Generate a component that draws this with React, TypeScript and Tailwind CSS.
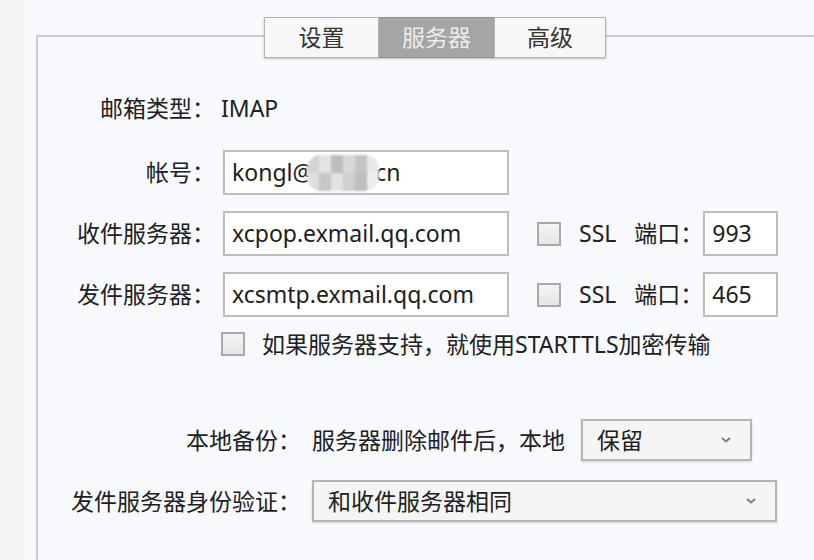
import React from 'react';

const Chevron: React.FC = () => (
  <svg width="12" height="8" viewBox="0 0 12 8" className="shrink-0">
    <path d="M2 2 L6 5.5 L10 2" fill="none" stroke="#808080" strokeWidth="2" />
  </svg>
);

const Checkbox: React.FC = () => (
  <div className="h-[24px] w-[24px] shrink-0 border-2 border-[#a9a9a9] bg-gradient-to-b from-[#f4f4f4] to-[#e6e6e6]" />
);

const TextBox: React.FC<{ className?: string; children: React.ReactNode }> = ({ className = '', children }) => (
  <div className={`flex h-[45px] items-center overflow-hidden border-2 border-[#bdbdbd] bg-white px-[7px] ${className}`}>
    {children}
  </div>
);

// blurred part of the address
const Mosaic: React.FC = () => {
  const tiles = ['#d4d4d4', '#e4e4e4', '#bdbdbd', '#d8d8d8', '#c4c4c4', '#e8e8e8', '#dedede', '#c6c6c6', '#e2e2e2', '#cfcfcf', '#bfbfbf', '#ededed'];
  return (
    <span className="-ml-[6px] -mr-[4px] inline-grid h-[36px] w-[72px] shrink-0 grid-cols-6 grid-rows-2 overflow-hidden rounded-[14px] blur-[1px]">
      {tiles.map((c, i) => (
        <span key={i} className="block" style={{ backgroundColor: c }} />
      ))}
    </span>
  );
};

const ServerRow: React.FC<{ label: string; host: string; port: string }> = ({ label, host, port }) => (
  <div className="flex items-center">
    <div className="w-[177px] shrink-0 text-right">{label}</div>
    <TextBox className="ml-[8px] w-[286px]">{host}</TextBox>
    <div className="ml-[28px] flex items-center">
      <Checkbox />
      <span className="ml-[18px]">SSL</span>
      <span className="ml-[18px]">端口：</span>
    </div>
    <TextBox className="w-[75px]">{port}</TextBox>
  </div>
);

export default function App() {
  return (
    <div className="flex h-[560px] w-[814px] overflow-hidden bg-[#f8f9fd] font-['Noto_Sans','Noto_Sans_CJK_SC',sans-serif] text-[23px] text-[#202020]">
      <div className="w-[24px] shrink-0 bg-[#f4f4f4]" />
      <div className="relative flex-1">
        {/* tab strip over the group box border */}
        <div className="absolute left-[240px] top-[17px] z-10 flex h-[41px] text-[23px] shadow-[0_1px_2px_rgba(0,0,0,0.25)]">
          <div className="flex w-[115px] items-center justify-center border border-[#b3b3b3] bg-[#f7f7f7] text-[#333]">设置</div>
          <div className="flex w-[115px] items-center justify-center border-y border-[#8f8f8f] bg-[#a5a5a5] text-[#ececec]">服务器</div>
          <div className="flex w-[112px] items-center justify-center border border-[#b3b3b3] bg-[#f7f7f7] text-[#333]">高级</div>
        </div>

        <div className="ml-[12px] mt-[35px] h-full border-l-2 border-t-2 border-[#cbcbcb] pt-[49px]">
          <div className="flex h-[44px] items-center">
            <div className="w-[177px] shrink-0 text-right">邮箱类型：</div>
            <div className="ml-[6px]">IMAP</div>
          </div>

          <div className="mt-[20px] flex items-center">
            <div className="w-[177px] shrink-0 text-right">帐号：</div>
            <TextBox className="ml-[8px] w-[286px]">
              <span>kongl@</span>
              <Mosaic />
              <span>cn</span>
            </TextBox>
          </div>

          <div className="mt-[16px]">
            <ServerRow label="收件服务器：" host="xcpop.exmail.qq.com" port="993" />
          </div>
          <div className="mt-[16px]">
            <ServerRow label="发件服务器：" host="xcsmtp.exmail.qq.com" port="465" />
          </div>

          <div className="mt-[15px] flex h-[24px] items-center pl-[183px]">
            <Checkbox />
            <span className="ml-[17px]">如果服务器支持，就使用STARTTLS加密传输</span>
          </div>

          <div className="mt-[63px] flex items-center">
            <div className="w-[263px] shrink-0 text-right">本地备份：</div>
            <span className="ml-[11px]">服务器删除邮件后，本地</span>
            <div className="ml-[16px] flex h-[42px] w-[171px] items-center justify-between border-2 border-[#b5b5b5] bg-[#f5f5f5] pl-[14px] pr-[18px] shadow-[0_1px_2px_rgba(0,0,0,0.15)]">
              <span>保留</span>
              <Chevron />
            </div>
          </div>

          <div className="mt-[19px] flex items-center">
            <div className="w-[263px] shrink-0 text-right">发件服务器身份验证：</div>
            <div className="ml-[11px] flex h-[42px] w-[465px] items-center justify-between border-2 border-[#b5b5b5] bg-[#f5f5f5] pl-[14px] pr-[18px] shadow-[0_1px_2px_rgba(0,0,0,0.15)]">
              <span>和收件服务器相同</span>
              <Chevron />
            </div>
          </div>
        </div>
      </div>
    </div>
  );
}
